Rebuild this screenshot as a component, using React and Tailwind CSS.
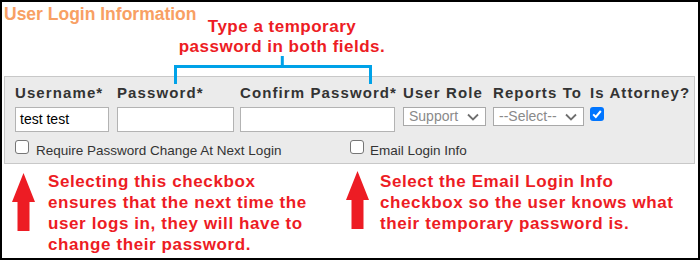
import React from "react";

const font = "font-['Liberation_Sans',Arial,sans-serif]";

function Arrow({ className }) {
  return (
    <svg width="23" height="58" viewBox="0 0 23 58" className={className}>
      <path d="M11.5 0 L23 29 L17.5 29 L17.5 58 L5.5 58 L5.5 29 L0 29 Z" fill="#ed1c24" />
    </svg>
  );
}

function Checkbox({ checked }) {
  if (checked) {
    return (
      <span className="flex h-[14px] w-[14px] shrink-0 items-center justify-center rounded-[3px] bg-[#0075ff]">
        <svg width="12" height="12" viewBox="0 0 12 12">
          <path d="M2.2 6.4 L4.8 9 L9.8 3" fill="none" stroke="#fff" strokeWidth="2" />
        </svg>
      </span>
    );
  }

  return (
    <span className="block h-[14px] w-[14px] shrink-0 rounded-[3px] border border-[#767676] bg-white" />
  );
}

function Select({ value, width }) {
  return (
    <div
      className={`flex h-[19px] items-center justify-between border border-[#a9a9a9] bg-white pl-[5px] pr-[6px] text-[14px] leading-[17px] text-[#8a8a8a] ${width}`}
    >
      <span>{value}</span>
      <svg width="12" height="8" viewBox="0 0 12 8">
        <path d="M1 1.5 L6 6.5 L11 1.5" fill="none" stroke="#6f6f6f" strokeWidth="1.8" />
      </svg>
    </div>
  );
}

function Field({ label, children }) {
  return (
    <div>
      <div className="whitespace-nowrap text-[15px] font-bold leading-[18px] tracking-[1.1px] text-[#333]">
        {label}
      </div>
      <div className="mt-[5px]">{children}</div>
    </div>
  );
}

function TextInput({ value, width }) {
  return (
    <div
      className={`flex h-[25px] items-center border border-[#b3b3b3] bg-white px-[4px] text-[14px] text-black ${width}`}
    >
      {value}
    </div>
  );
}

export default function App() {
  return (
    <div className={`relative h-[260px] w-[700px] overflow-hidden border-2 border-black bg-white ${font}`}>
      <div className="pl-[2px] pt-[2px] text-[17.5px] font-bold leading-[20px] text-[#f8a064]">
        User Login Information
      </div>

      {/* callout over the password fields */}
      <div className="absolute left-[150px] top-[15px] w-[260px] whitespace-nowrap text-center text-[17px] font-bold leading-[20px] tracking-[0.5px] text-[#ed1c24]">
        Type a temporary
        <br />
        password in both fields.
      </div>
      <svg
        width="199"
        height="28"
        viewBox="0 0 199 28"
        className="absolute left-[172px] top-[54px] z-10"
      >
        <path
          d="M1.5 28 V10.5 H196.5 V28 M108.3 0 V10.5"
          fill="none"
          stroke="#00a2e8"
          strokeWidth="3"
        />
      </svg>

      <div className="ml-[2px] mt-[52px] w-[691px] border border-[#c8c8c8] bg-[#ebebeb] pb-[4px] pl-[10px] pt-[7px]">
        <div className="grid grid-cols-[102px_123px_163px_90px_97px_auto]">
          <Field label="Username*">
            <TextInput value="test test" width="w-[94px]" />
          </Field>
          <Field label="Password*">
            <TextInput value="" width="w-[117px]" />
          </Field>
          <Field label="Confirm Password*">
            <TextInput value="" width="w-[155px]" />
          </Field>
          <Field label="User Role">
            <Select value="Support" width="w-[83px]" />
          </Field>
          <Field label="Reports To">
            <Select value="--Select--" width="w-[91px]" />
          </Field>
          <Field label="Is Attorney?">
            <Checkbox checked />
          </Field>
        </div>

        <div className="mt-[8px] flex text-[13.5px] leading-[16px] text-[#333]">
          <div className="flex w-[335px] items-start gap-[7px]">
            <Checkbox />
            <span className="mt-[3px]">Require Password Change At Next Login</span>
          </div>
          <div className="flex items-start gap-[6px]">
            <Checkbox />
            <span className="mt-[3px]">Email Login Info</span>
          </div>
        </div>
      </div>

      <div className="mt-[7px] flex pl-[10px] text-[17px] font-bold leading-[21px] tracking-[0.6px] text-[#ed1c24]">
        <div className="flex w-[334px] items-start">
          <Arrow className="mt-[2px] shrink-0" />
          <p className="ml-[13px] whitespace-nowrap">
            Selecting this checkbox
            <br />
            ensures that the next time the
            <br />
            user logs in, they will have to
            <br />
            change their password.
          </p>
        </div>
        <div className="flex items-start">
          <Arrow className="shrink-0" />
          <p className="ml-[11px] whitespace-nowrap">
            Select the Email Login Info
            <br />
            checkbox so the user knows what
            <br />
            their temporary password is.
          </p>
        </div>
      </div>
    </div>
  );
}
